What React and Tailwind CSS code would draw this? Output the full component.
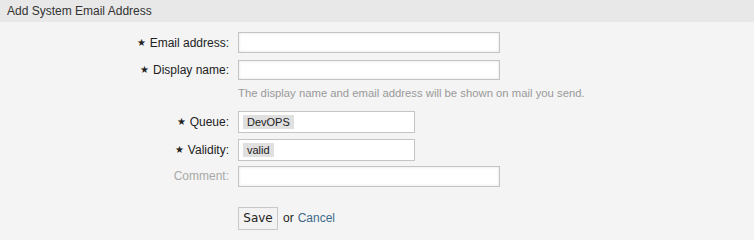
import React from 'react';

const Star = () => <span className="mr-[4px] text-[10px] align-[1px]">★</span>;

const Row = ({ label, required, muted, children, className = '' }) => (
  <div className={`flex items-center ${className}`}>
    <label
      className={`w-[230px] text-right pr-[1px] text-[12px] ${muted ? 'text-[#a9a9a9]' : 'text-[#222]'}`}
    >
      {required && <Star />}
      {label}
    </label>
    <div className="ml-[8px]">{children}</div>
  </div>
);

const TextInput = ({ h = 'h-[21px]' }) => (
  <div className={`${h} w-[262px] bg-white border border-[#c4c4c4] shadow-[inset_0_0_3px_rgba(0,0,0,0.12)]`} />
);

const SelectBox = ({ value }) => (
  <div className="h-[22px] w-[177px] bg-white border border-[#c4c4c4] flex items-center pl-[4px]">
    <span className="bg-[#e0e0e0] px-[4px] h-[14px] leading-[14px] text-[11px] text-[#222]">{value}</span>
  </div>
);

export default function App() {
  return (
    <div className="w-[754px] h-[240px] bg-[#f4f4f4] font-['Liberation_Sans',Arial,sans-serif]">
      <div className="h-[22px] bg-[#e8e8e8] pl-[7px] flex items-center text-[12px] text-[#333]">
        Add System Email Address
      </div>
      <div className="pt-[10px]">
        <Row label="Email address:" required>
          <TextInput />
        </Row>
        <Row label="Display name:" required className="mt-[7px]">
          <TextInput h="h-[20px]" />
        </Row>
        <div className="ml-[238px] mt-[5px] text-[11.3px] text-[#999]">
          The display name and email address will be shown on mail you send.
        </div>
        <Row label="Queue:" required className="mt-[9px]">
          <SelectBox value="DevOPS" />
        </Row>
        <Row label="Validity:" required className="mt-[6px]">
          <SelectBox value="valid" />
        </Row>
        <Row label="Comment:" muted className="mt-[5px]">
          <TextInput />
        </Row>
        <div className="ml-[238px] mt-[20px] flex items-center text-[12px]">
          <button className="h-[23px] w-[40px] bg-[#f2f2f2] border border-[#c8c8c8] font-['DejaVu_Sans',sans-serif] text-[12px] text-[#222]">
            Save
          </button>
          <span className="ml-[5px] text-[#222]">or</span>
          <a className="ml-[4px] text-[#3e6a8a]">Cancel</a>
        </div>
      </div>
    </div>
  );
}
